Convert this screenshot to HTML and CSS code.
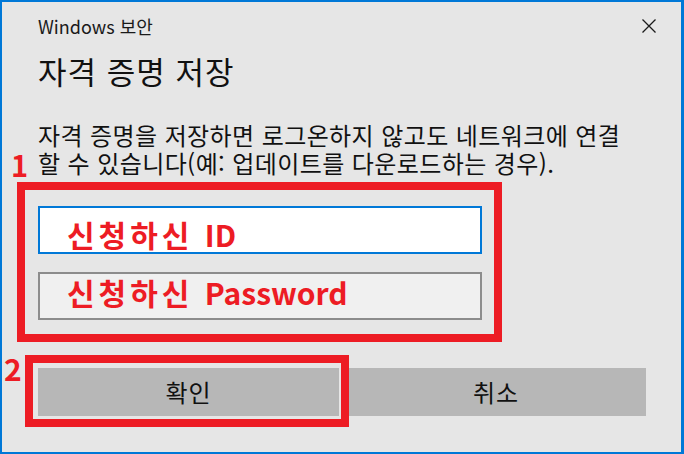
FILE: index.html
```html
<!DOCTYPE html>
<html lang="ko">
<head>
  <meta charset="UTF-8">
  <title>Windows 보안</title>
  <link rel="stylesheet" href="styles.css">
</head>
<body>
  <div class="dialog">
    <div class="titlebar">
      <span class="app-name">Windows 보안</span>
      <span class="close" title="닫기">
        <svg width="14" height="14" viewBox="0 0 14 14">
          <path d="M0.5 0.5 L13.5 13.5 M13.5 0.5 L0.5 13.5" stroke="#1a1a1a" stroke-width="1.3" fill="none"/>
        </svg>
      </span>
    </div>

    <h1 class="heading">자격 증명 저장</h1>

    <p class="desc">자격 증명을 저장하면 로그온하지 않고도 네트워크에 연결<br>할 수 있습니다(예: 업데이트를 다운로드하는 경우).</p>

    <!-- annotation 1: the two credential fields -->
    <div class="mark mark-fields">
      <span class="step step-1">1</span>
      <div class="field field-focus"><span class="ko">신청하신</span> <span class="en">ID</span></div>
      <div class="field"><span class="ko">신청하신</span> <span class="en">Password</span></div>
    </div>

    <div class="actions">
      <!-- annotation 2: OK button -->
      <div class="mark mark-ok">
        <span class="step step-2">2</span>
        <div class="btn">확인</div>
      </div>
      <div class="btn btn-cancel">취소</div>
    </div>
  </div>
</body>
</html>
```

FILE: styles.css
```css
* { box-sizing: border-box; }

body {
  margin: 0;
  font-family: "Noto Sans CJK KR", "Noto Sans", sans-serif;
  color: #000;
}

.dialog {
  width: 684px;
  height: 454px;
  background: #e6e6e6;
  border: 2px solid #0078d7;
  border-right-width: 3px;
  padding: 11px 35px 0 36px;
}

.titlebar {
  display: flex;
  align-items: center;
  justify-content: space-between;
  height: 26px;
}
.app-name {
  font-size: 18px;
  line-height: 26px;
  color: #1a1a1a;
}
.close {
  display: flex;
  margin-right: -10px;
}

.heading {
  margin: 12px 0 0;
  font-size: 31px;
  font-weight: normal;
  line-height: 40px;
  letter-spacing: 1px;
  color: #111;
}

.desc {
  margin: 30px 0 0;
  font-size: 24px;
  line-height: 28px;
  letter-spacing: 0.4px;
  color: #111;
}

.mark {
  position: relative;
  border: 8px solid #ed1c24;
}

.step {
  position: absolute;
  color: #ed1c24;
  font-weight: bold;
}

.mark-fields {
  margin: 5px 0 0 -21px;
  width: 485px;
  padding: 16px 12px 14px 13px;
  display: flex;
  flex-direction: column;
  gap: 18px;
}
.step-1 {
  left: -14px;
  top: -40px;
  font-size: 29px;
  line-height: 28px;
}

.field {
  height: 48px;
  border: 2px solid #8c8c8c;
  background: #f0f0f0;
  padding-left: 27px;
  color: #ed1c24;
  font-weight: bold;
  font-size: 30px;
  line-height: 36px;
  word-spacing: 3px;
  white-space: nowrap;
}
.field .ko { letter-spacing: 4px; }
.field-focus {
  border-color: #0078d7;
  background: #fff;
  padding-top: 6px;
  line-height: 40px;
}

.actions {
  display: flex;
  align-items: flex-start;
  margin: 13px 0 0 -13px;
}

.mark-ok {
  z-index: 1;
  padding: 5px 2px 3px 5px;
}
.step-2 {
  left: -29px;
  top: -10px;
  font-size: 30px;
  line-height: 30px;
}

.btn {
  height: 48px;
  background: #b7b7b7;
  font-size: 24px;
  line-height: 48px;
  letter-spacing: 0.8px;
  text-align: center;
  color: #111;
}
.mark-ok .btn { width: 301px; }
.btn-cancel {
  flex: 1;
  margin: 13px 0 0 -3px;
}
```
